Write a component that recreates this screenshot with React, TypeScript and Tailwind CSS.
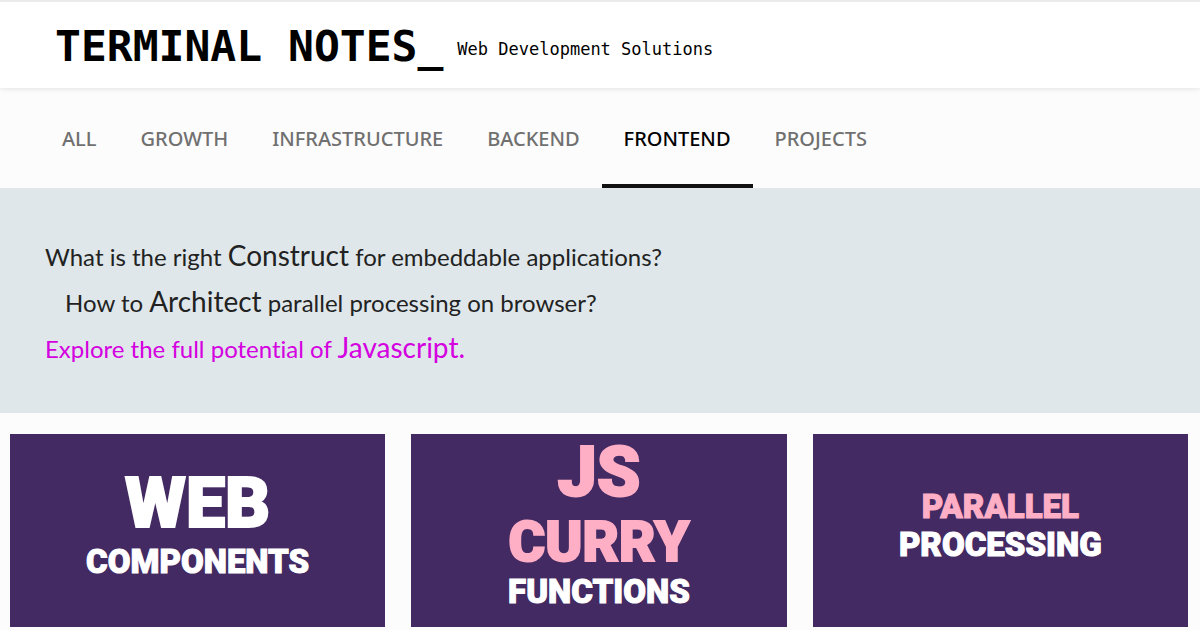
const tabs = ["ALL", "GROWTH", "INFRASTRUCTURE", "BACKEND", "FRONTEND", "PROJECTS"];

type Card = { padding: string; lines: { text: string; style: string }[] };

const cards: Card[] = [
  {
    padding: "pb-[10px]",
    lines: [
      { text: "WEB", style: "text-[70px] leading-[72px] text-white [-webkit-text-stroke:2px_currentColor]" },
      { text: "COMPONENTS", style: "text-[33px] leading-[46px] text-white [-webkit-text-stroke:1px_currentColor]" },
    ],
  },
  {
    padding: "pb-[18px]",
    lines: [
      { text: "JS", style: "text-[70px] leading-[72px] text-[#ffafc5] [-webkit-text-stroke:2px_currentColor]" },
      { text: "CURRY", style: "text-[56px] leading-[68px] text-[#ffafc5] [-webkit-text-stroke:2px_currentColor]" },
      { text: "FUNCTIONS", style: "text-[33px] leading-[32px] text-white [-webkit-text-stroke:1px_currentColor]" },
    ],
  },
  {
    padding: "pb-[10px]",
    lines: [
      { text: "PARALLEL", style: "text-[33px] leading-[38px] text-[#ffafc5] [-webkit-text-stroke:1px_currentColor]" },
      { text: "PROCESSING", style: "text-[33px] leading-[38px] text-white [-webkit-text-stroke:1px_currentColor]" },
    ],
  },
];

export default function App() {
  return (
    <div className="min-h-screen bg-[#fcfcfc] font-['Lato',sans-serif]">
      <header className="relative flex items-center gap-[14px] border-t-2 border-[#ebebeb] bg-white pr-14 pl-[55px] pt-[18px] pb-[15px] font-['DejaVu_Sans_Mono',monospace] text-black shadow-[0_1px_5px_rgba(0,0,0,0.10)]">
        <h1 className="text-[43px] leading-[53px] font-bold">
          <a href="#home">TERMINAL NOTES_</a>
        </h1>
        <p className="pt-1 text-[17px] leading-6">Web Development Solutions</p>
      </header>

      <nav aria-label="Categories" className="flex px-10 font-['Noto_Sans',sans-serif]">
        {tabs.map((tab) => (
          <a
            key={tab}
            href={`#${tab.toLowerCase()}`}
            aria-current={tab === "FRONTEND" ? "page" : undefined}
            className={`border-b-4 px-[22px] pt-[37px] pb-[31px] text-[20px] leading-7 font-medium ${
              tab === "FRONTEND" ? "border-[#111111] text-black" : "border-transparent text-[#707070]"
            }`}
          >
            {tab}
          </a>
        ))}
      </nav>

      <section className="bg-[#dfe7ea] px-[45px] pt-[46px] pb-[41px] text-[24px] leading-[46px] text-[#222222] [font-variant-ligatures:none]">
        <p>
          What is the right <span className="text-[28px] leading-none">Construct</span> for embeddable applications?
        </p>
        <p className="pl-5">
          How to <span className="text-[28px] leading-none">Architect</span> parallel processing on browser?
        </p>
        <p className="text-[#d400e0]">
          Explore the full potential of <span className="text-[28px] leading-none">Javascript.</span>
        </p>
      </section>

      <main className="grid grid-cols-3 gap-[26px] pt-[21px] pr-3 pb-[3px] pl-[10px]">
        {cards.map(({ padding, lines }) => (
          <a
            key={lines[0].text}
            href={`#${lines[0].text.toLowerCase()}`}
            className={`flex min-h-[193px] flex-col items-center justify-center bg-[#432a63] font-['Roboto',sans-serif] font-black ${padding}`}
          >
            {lines.map((line) => (
              <span key={line.text} className={line.style}>
                {line.text}
              </span>
            ))}
          </a>
        ))}
      </main>
    </div>
  );
}
